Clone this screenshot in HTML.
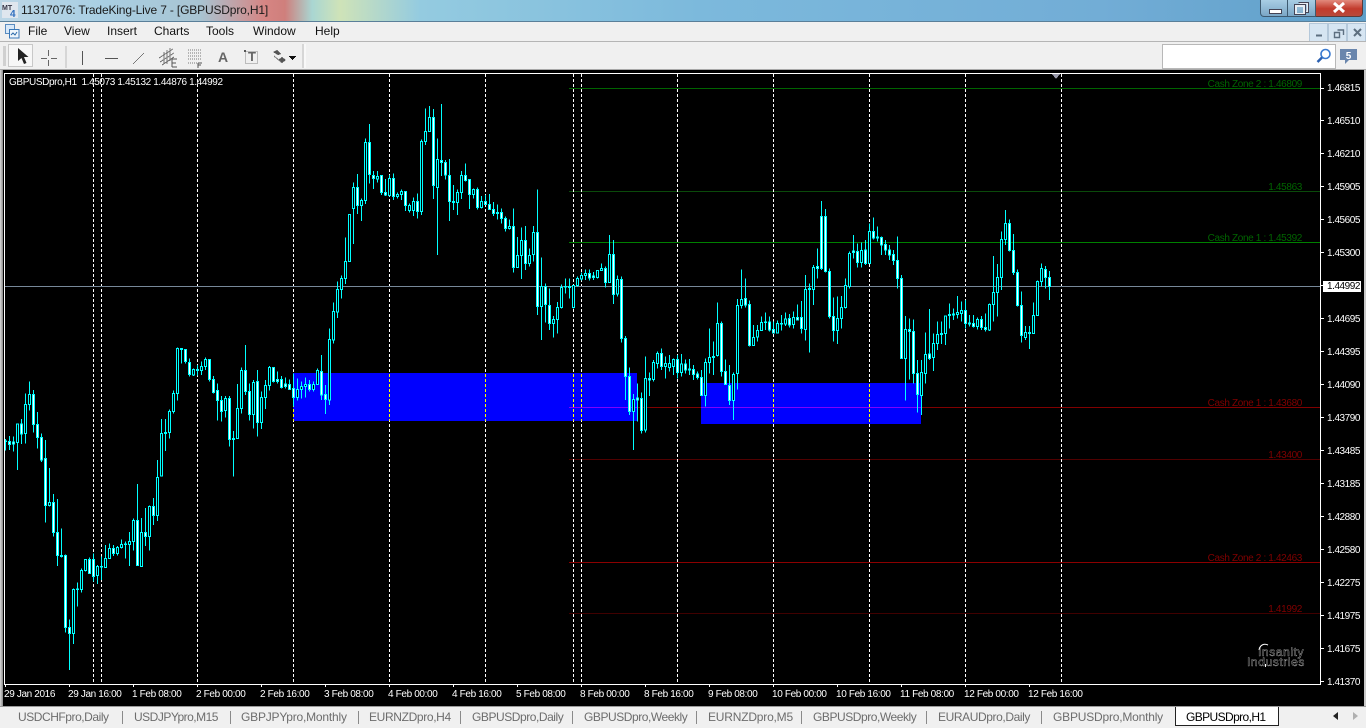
<!DOCTYPE html>
<html><head><meta charset="utf-8"><title>MT4</title>
<style>
html,body{margin:0;padding:0;width:1366px;height:728px;overflow:hidden;background:#f0f0f0}
body{position:relative;font-family:"Liberation Sans",sans-serif}
div,span,svg{position:absolute}
.t{white-space:pre;font:10px/12px "Liberation Sans",sans-serif;letter-spacing:-.45px;color:#fff}
.p{left:1327px}
.x{top:689px;letter-spacing:-.36px}
.l{right:64px;letter-spacing:-.35px}
.m{top:24px;font:12px/15px "Liberation Sans",sans-serif;color:#111;white-space:pre}
.tab{top:710px;font:12px/15px "Liberation Sans",sans-serif;letter-spacing:-.45px;color:#6d6d6d;white-space:pre}
.sep{top:711px;width:1px;height:13px;background:#8a8a8a}
</style></head><body>
<div style="left:0;top:0;width:1366px;height:21px;background:linear-gradient(90deg,#bcd6e6 0,#a9cfe3 100px,#a8c4d2 200px,#d68583 265px,#cf7f7c 285px,#a9d6d2 312px,#cfe3b8 340px,#94cbe0 420px,#7cb9dc 700px,#72add6 1100px,#5f9fc9 1366px)"></div>
<div style="left:0;top:21px;width:1366px;height:1px;background:#5a7f99"></div>
<svg style="left:2px;top:2px" width="16" height="16"><rect width="16" height="16" fill="#dfe6ee"/><text x="0" y="8" font-size="7" font-weight="bold" fill="#334" font-family="Liberation Sans">MT</text><text x="8" y="15" font-size="10" font-weight="bold" fill="#2f6fc0" font-family="Liberation Sans">4</text></svg>
<span class="m" style="left:21px;top:3px;color:#1a1a1a;letter-spacing:-.16px">11317076: TradeKing-Live 7 - [GBPUSDpro,H1]</span>
<div style="left:1260px;top:0;width:28px;height:17px;box-sizing:border-box;border:1px solid #3d5a70;border-top:0;border-radius:0 0 0 4px;background:linear-gradient(#a8cde4,#7ba7c6)"></div>
<div style="left:1269px;top:9px;width:11px;height:3px;background:#fff;border:1px solid #445"></div>
<div style="left:1288px;top:0;width:28px;height:17px;box-sizing:border-box;border:1px solid #3d5a70;border-top:0;border-left:0;background:linear-gradient(#a8cde4,#7ba7c6)"></div>
<svg style="left:1294px;top:2px" width="16" height="13"><path d="M5.5 1.5h8v8h-3" fill="none" stroke="#e8eef3" stroke-width="1.5"/><path d="M4.5.5h10v10h-3" fill="none" stroke="#445"/><rect x="2" y="4" width="8" height="8" fill="none" stroke="#e8eef3" stroke-width="2"/><rect x=".5" y="2.5" width="11" height="10" fill="none" stroke="#445"/></svg>
<div style="left:1316px;top:0;width:47px;height:17px;box-sizing:border-box;border:1px solid #5a3a3a;border-top:0;border-left:0;border-radius:0 0 4px 0;background:linear-gradient(#e28a7d,#c23a2c 55%,#b84a3c)"></div>
<svg style="left:1332px;top:2px" width="14" height="11"><path d="M2 1L12 10M12 1L2 10" stroke="#fff" stroke-width="3" fill="none"/></svg>

<div style="left:0;top:22px;width:1366px;height:19px;background:#f0f0f0"></div>
<svg style="left:5px;top:24px" width="15" height="15"><rect x=".5" y=".5" width="9" height="9" fill="#d8e8f8" stroke="#5a8cc0"/><rect x="4.5" y="5.5" width="9.5" height="8.5" fill="#eef5fb" stroke="#3a78b8"/><path d="M6 11l2-2 2 2 2-3" stroke="#2a68a8" fill="none"/></svg>
<span class="m" style="left:28px">File</span><span class="m" style="left:64px">View</span><span class="m" style="left:107px">Insert</span><span class="m" style="left:154px">Charts</span><span class="m" style="left:206px">Tools</span><span class="m" style="left:253px">Window</span><span class="m" style="left:315px">Help</span>
<div style="left:1309px;top:23px;width:17px;height:17px;background:#d6e5f2;border:1px solid #b4c8da"></div>
<div style="left:1328px;top:23px;width:17px;height:17px;background:#d6e5f2;border:1px solid #b4c8da"></div>
<div style="left:1347px;top:23px;width:17px;height:17px;background:#d6e5f2;border:1px solid #b4c8da"></div>
<svg style="left:1309px;top:23px" width="57" height="19"><path d="M7 12.5h6" stroke="#5d6f80" stroke-width="2"/><path d="M25.5 9.5h5v5h-5zM28.5 7h6v5" fill="none" stroke="#5d6f80" stroke-width="1.4"/><path d="M45 6l7 7M52 6l-7 7" stroke="#5d6f80" stroke-width="2"/></svg>

<div style="left:0;top:41px;width:1366px;height:1px;background:#b5b5b5"></div>
<div style="left:0;top:42px;width:1366px;height:27px;background:#f0f0f0"></div>
<div style="left:0;top:69px;width:1366px;height:1px;background:#a8a8a8"></div>
<svg style="left:0;top:42px" width="310" height="27" shape-rendering="crispEdges">
<path d="M3 5h3M3 7h3M3 9h3M3 11h3M3 13h3M3 15h3M3 17h3M3 19h3M3 21h3M3 23h3" stroke="#b0b0b0"/>
<rect x="8.5" y="2.5" width="24" height="22" fill="#f7f7f7" stroke="#c8c8c8"/>
<path d="M66 4v22" stroke="#bbb"/><path d="M303 2v24" stroke="#bbb"/><path d="M305 2v24" stroke="#fff"/>
<path d="M48.5 8v6M48.5 18v6M41 16.5h6M51 16.5h6" stroke="#666"/>
<path d="M82.5 9v14" stroke="#555"/><path d="M105 16.5h13" stroke="#555"/>
<path d="M133 22h1v-1h1v-1h1v-1h1v-1h1v-1h1v-1h1v-1h1v-1h1v-1h1v-1h1v-1h-1v1h-1v1h-1v1h-1v1h-1v1h-1v1h-1v1h-1v1h-1v1h-1v1h-1z" fill="#777"/>
<path d="M159 16l14-9M160 20l14-9M162 23l12-8M164 10v12M167 8v14M170 6v13" stroke="#777" fill="none"/>
<path d="M172 20h5M172 20v8M172 24h4M172 28h5" stroke="#555" transform="translate(0,-3)"/>
<path d="M188 8h14M188 11h14M188 14h14M188 17h14M188 21h10" stroke="#777" stroke-dasharray="1 1"/>
<path d="M198 20h4M198 20v5M198 22h3" stroke="#555" transform="translate(0,1)"/>
<rect x="245.5" y="9.5" width="12" height="12" fill="none" stroke="#888" stroke-dasharray="1 1"/>
<rect x="244" y="8" width="2" height="2" fill="#555"/>
<path d="M273 10l4-2 4 4-3 1zM282 15l4 3-4 3-4-3z" fill="#555"/><path d="M274 14l7 6" stroke="#777"/>
<path d="M289 14h7v1h-1v1h-1v1h-1v1h-1v-1h-1v-1h-1v-1h-1z" fill="#111"/>
</svg>
<svg style="left:17px;top:48px" width="16" height="18"><path d="M1 0L1 13 4.5 10 7 16 9.5 15 7 9 11.5 9Z" fill="#222"/></svg>
<span style="left:218px;top:49px;font:bold 14px/16px 'Liberation Sans',sans-serif;color:#666">A</span>
<span style="left:248px;top:50px;font:bold 13px/14px 'Liberation Sans',sans-serif;color:#666">T</span>
<div style="left:1162px;top:44px;width:172px;height:23px;background:#fff;border:1px solid #b8b8b8"></div>
<svg style="left:1316px;top:48px" width="16" height="16"><circle cx="9.5" cy="6" r="4.5" fill="none" stroke="#3a7ad0" stroke-width="1.6"/><path d="M6 9.5L1.5 14" stroke="#2a5fb0" stroke-width="2.5"/></svg>
<svg style="left:1340px;top:49px" width="18" height="17"><path d="M0 0h17v11H9l-4 4v-4H0z" fill="#6a86ad"/><text x="8.5" y="10" text-anchor="middle" fill="#fff" font-size="10" font-weight="bold" font-family="Liberation Sans">5</text></svg>

<div style="left:0;top:70px;width:3px;height:637px;background:linear-gradient(90deg,#d8d8d8,#8a8a8a)"></div>
<div style="left:1364px;top:70px;width:2px;height:637px;background:#c8c8c8"></div>
<div style="left:3px;top:70px;width:1361px;height:636px;background:#000"></div>
<div style="left:0;top:706px;width:1366px;height:1px;background:#9a9a9a"></div>

<svg style="left:0;top:0" width="1366" height="728" shape-rendering="crispEdges">
<rect x="3" y="70" width="1361" height="636" fill="#000"/>
<rect x="293" y="373" width="344" height="48" fill="#00f"/>
<rect x="701" y="383" width="220" height="41" fill="#00f"/>
<g stroke="#fff" stroke-dasharray="3 2" style="mix-blend-mode:difference">
<path d="M93.5 74V684M101.5 74V684M197.5 74V684M293.5 74V684M389.5 74V684M485.5 74V684M573.5 74V684M581.5 74V684M677.5 74V684M773.5 74V684M869.5 74V684M965.5 74V684M1061.5 74V684"/>
</g>
<g style="mix-blend-mode:screen" fill="none">
<path d="M569 88.5H1321" stroke="#006400"/>
<path d="M569 191.5H1321" stroke="#0a4a0a"/>
<path d="M569 242.5H1321" stroke="#008000"/>
<path d="M569 407.5H1321" stroke="#800000"/>
<path d="M569 459.5H1321" stroke="#500000"/>
<path d="M569 562.5H1321" stroke="#8b0000"/>
<path d="M569 613.5H1321" stroke="#400000"/>
</g>
<path d="M5 286.5H1321" stroke="#778899"/>

<g transform="matrix(.33333 0 0 .33333 .16667 340)" stroke="#0ff" stroke-width="3" fill="none">
<path d="M16 297V332M28 288V330M40 290V335M52 250V390M64 237V312M76 160V310M88 124V212M100 150V278M112 216V326M124 280V366M136 300V548M148 384V500M160 462V590M172 477V678M184 565V652M196 643V878M208 838V990M220 745V912M232 728V800M244 685V758M256 658V695M268 652V702M280 640V724M292 675V732M304 650V720M316 615V684M328 610V656M340 615V648M352 618V646M364 598V625M376 605V656M388 576V678M400 535V632M412 432V678M424 534V680M436 504V618M448 496V632M460 474V555M472 360V543M484 237V410M496 237V333M508 208V296M520 152V220M532 22V182M544 25V70M556 28V70M568 55V110M580 85V108M592 75V107M604 65V105M616 52V90M628 57V125M640 108V160M652 130V242M664 168V245M676 168V232M688 168V320M700 273V410M712 132V296M724 82V220M736 15V165M748 130V242M760 120V266M772 90V290M784 155V267M796 120V207M808 78V152M820 82V128M832 95V130M844 108V145M856 112V146M868 118V150M880 100V200M892 115V182M904 125V175M916 112V173M928 120V155M940 125V155M952 85V135M964 45V180M976 135V222"/>
<path fill="#000" d="M13 303h6V305h-6zM49 252h6V308h-6zM73 193h6V280h-6zM85 163h6V193h-6zM145 487h6V497h-6zM217 748h6V880h-6zM229 747h6V749h-6zM241 691h6V749h-6zM253 658h6V692h-6zM289 680h6V707h-6zM301 679h6V681h-6zM313 655h6V683h-6zM325 625h6V655h-6zM349 622h6V641h-6zM361 613h6V623h-6zM373 612h6V614h-6zM385 604h6V614h-6zM397 541h6V604h-6zM421 577h6V680h-6zM445 499h6V590h-6zM469 412h6V527h-6zM481 280h6V408h-6zM505 214h6V278h-6zM517 160h6V215h-6zM529 25h6V160h-6zM577 88h6V105h-6zM601 79h6V92h-6zM613 58h6V79h-6zM673 175h6V212h-6zM709 205h6V296h-6zM721 91h6V205h-6zM757 127h6V223h-6zM781 172h6V247h-6zM793 136h6V172h-6zM805 82h6V136h-6zM889 148h6V172h-6zM901 139h6V148h-6zM913 133h6V139h-6zM937 133h6V149h-6zM949 91h6V133h-6z"/>
<path fill="#fff" d="M25 304h6V314h-6zM37 306h6V312h-6zM61 252h6V282h-6zM97 163h6V254h-6zM109 253h6V292h-6zM121 292h6V360h-6zM133 355h6V497h-6zM157 487h6V578h-6zM169 577h6V647h-6zM181 646h6V649h-6zM193 646h6V863h-6zM205 862h6V880h-6zM265 658h6V700h-6zM277 658h6V710h-6zM337 625h6V641h-6zM409 541h6V677h-6zM433 577h6V590h-6zM457 499h6V527h-6zM493 277h6V281h-6zM541 25h6V29h-6zM553 28h6V65h-6zM565 67h6V104h-6zM589 88h6V92h-6zM625 58h6V119h-6zM637 118h6V157h-6zM649 151h6V181h-6zM661 181h6V214h-6zM685 175h6V298h-6zM697 295h6V298h-6zM733 91h6V155h-6zM745 154h6V223h-6zM769 124h6V248h-6zM817 82h6V125h-6zM829 118h6V125h-6zM841 118h6V143h-6zM853 132h6V140h-6zM865 133h6V148h-6zM877 145h6V172h-6zM925 133h6V149h-6zM961 94h6V165h-6zM973 163h6V179h-6z"/>
</g>

<g transform="matrix(.33333 0 0 .33333 300.16667 90)" stroke="#0ff" stroke-width="3" fill="none">
<path d="M88 715V945M100 637V760M112 575V684M124 556V625M136 442V582M148 373V515M160 277V462M172 252V372M184 325V393M196 145V342M208 102V280M220 243V297M232 243V277M244 255V315M256 267V318M268 255V320M280 250V330M292 308V325M304 298V330M316 304V363M328 340V368M340 322V378M352 310V386M364 148V375M376 55V165M388 48V125M400 57V327M412 145V495M424 42V258M436 210V268M448 207V393M460 285V360M472 298V375M484 243V327M496 220V275M508 267V357M520 295V326M532 292V358M544 318V355M556 315V345M568 312V360M580 336V378M592 343V388M604 355V400M616 380V425M628 388V418M640 355V548M652 441V534M664 412V567M676 408V540M688 476V530M700 408V515M712 298V675M724 502V750M736 580V697M748 595V720M760 678V743M772 636V730M784 583V655M796 565V610M808 565V625M820 585V655M832 560V590M844 547V572M856 538V570M868 538V572M880 546V570M892 540V566M904 520V543M916 530V592M928 435V578M940 450V642M952 556V620M964 560V758M976 738V930M988 832V975M1000 912V1080M1012 880V995M1024 908V1030M1036 800V1028"/>
<path fill="#000" d="M85 748h6V930h-6zM97 664h6V750h-6zM109 598h6V666h-6zM121 565h6V598h-6zM133 514h6V566h-6zM145 373h6V515h-6zM157 292h6V356h-6zM181 332h6V347h-6zM193 157h6V332h-6zM229 259h6V267h-6zM265 265h6V316h-6zM289 313h6V320h-6zM301 304h6V314h-6zM325 346h6V362h-6zM337 334h6V362h-6zM361 154h6V365h-6zM373 124h6V154h-6zM385 82h6V124h-6zM409 208h6V293h-6zM469 307h6V338h-6zM481 256h6V307h-6zM517 298h6V314h-6zM541 334h6V353h-6zM625 409h6V415h-6zM649 496h6V532h-6zM661 451h6V496h-6zM685 496h6V520h-6zM697 427h6V494h-6zM721 590h6V650h-6zM757 688h6V700h-6zM769 652h6V688h-6zM781 592h6V652h-6zM793 589h6V591h-6zM817 587h6V653h-6zM829 565h6V587h-6zM841 556h6V567h-6zM853 550h6V556h-6zM889 541h6V563h-6zM901 535h6V541h-6zM925 493h6V578h-6zM949 568h6V612h-6zM997 928h6V965h-6zM1033 865h6V1020h-6z"/>
<path fill="#fff" d="M169 292h6V347h-6zM205 157h6V254h-6zM217 256h6V266h-6zM241 256h6V308h-6zM253 307h6V315h-6zM277 265h6V320h-6zM313 304h6V347h-6zM349 334h6V365h-6zM397 82h6V287h-6zM421 211h6V218h-6zM433 217h6V255h-6zM445 256h6V335h-6zM457 334h6V338h-6zM493 256h6V272h-6zM505 268h6V314h-6zM529 298h6V353h-6zM553 334h6V343h-6zM565 343h6V358h-6zM577 358h6V370h-6zM589 367h6V370h-6zM601 367h6V385h-6zM613 385h6V415h-6zM637 409h6V532h-6zM673 451h6V520h-6zM709 427h6V650h-6zM733 590h6V643h-6zM745 646h6V700h-6zM805 589h6V592h-6zM865 550h6V564h-6zM877 558h6V563h-6zM913 535h6V578h-6zM937 493h6V613h-6zM961 568h6V745h-6zM973 745h6V860h-6zM985 859h6V965h-6zM1009 924h6V930h-6zM1021 925h6V1022h-6z"/>
</g>

<g transform="matrix(.33333 0 0 .33333 640.16667 190)" stroke="#0ff" stroke-width="3" fill="none">
<path d="M28 548V618M40 510V575M52 485V535M64 475V540M76 500V565M88 495V545M100 505V555M112 495V565M124 492V560M136 508V550M148 507V555M160 525V570M172 545V568M184 540V618M196 505V650M208 415V550M220 455V555M232 337V500M244 395V560M256 508V585M268 525V645M280 548V690M292 327V598M304 238V355M316 265V352M328 332V470M340 405V468M352 405V455M364 380V423M376 367V420M388 380V425M400 395V430M412 392V430M424 375V422M436 368V408M448 372V412M460 365V415M472 343V392M484 333V430M496 255V452M508 280V488M520 225V345M532 175V265M544 33V240M556 57V247M568 235V385M580 322V455M592 320V462M604 318V415M616 265V355M628 185V295M640 135V205M652 160V233M664 158V232M676 150V225M688 100V222M700 82V148M712 110V155M724 140V195M736 150V195M748 165V210M760 180V225M772 140V295M784 255V505M796 378V632M808 385V568M820 388V580M832 510V668M844 510V675M856 427V580M868 357V510M880 430V543M892 395V480M904 395V462M916 378V465M928 340V415M940 355V390M952 318V385M964 335V395M976 330V415M988 375V410M1000 375V412M1012 382V418M1024 378V420M1036 370V425M1048 340V423M1060 198V395M1072 222V380M1084 125V300M1096 60V165M1108 88V185M1120 132V255M1132 238V350M1144 305V458M1156 408V450M1168 408V477M1180 337V432M1192 272V378M1204 220V290M1216 228V295M1228 243V330"/>
<path fill="#000" d="M37 517h6V569h-6zM49 490h6V520h-6zM73 520h6V530h-6zM85 520h6V533h-6zM97 508h6V530h-6zM121 522h6V548h-6zM193 517h6V617h-6zM205 502h6V518h-6zM229 400h6V497h-6zM277 553h6V632h-6zM289 347h6V550h-6zM301 328h6V347h-6zM337 442h6V467h-6zM349 421h6V441h-6zM361 397h6V421h-6zM373 396h6V398h-6zM409 400h6V429h-6zM421 400h6V402h-6zM433 387h6V402h-6zM457 382h6V404h-6zM493 298h6V418h-6zM517 232h6V298h-6zM589 385h6V421h-6zM601 352h6V385h-6zM613 287h6V353h-6zM625 190h6V290h-6zM661 181h6V218h-6zM685 124h6V221h-6zM793 418h6V505h-6zM841 547h6V617h-6zM853 493h6V550h-6zM877 460h6V503h-6zM889 433h6V460h-6zM913 378h6V431h-6zM925 373h6V376h-6zM937 372h6V375h-6zM949 367h6V373h-6zM961 361h6V370h-6zM985 399h6V402h-6zM1009 388h6V410h-6zM1045 343h6V420h-6zM1057 307h6V344h-6zM1069 262h6V307h-6zM1081 149h6V262h-6zM1093 100h6V149h-6zM1153 427h6V443h-6zM1165 427h6V430h-6zM1177 376h6V430h-6zM1189 275h6V376h-6zM1201 235h6V275h-6z"/>
<path fill="#fff" d="M25 566h6V570h-6zM61 490h6V530h-6zM109 508h6V548h-6zM133 522h6V540h-6zM145 537h6V540h-6zM157 538h6V554h-6zM169 552h6V563h-6zM181 562h6V617h-6zM217 499h6V503h-6zM241 400h6V545h-6zM253 544h6V584h-6zM265 586h6V632h-6zM313 325h6V345h-6zM325 343h6V467h-6zM385 396h6V420h-6zM397 418h6V429h-6zM445 385h6V405h-6zM469 382h6V390h-6zM481 382h6V416h-6zM505 295h6V299h-6zM529 229h6V236h-6zM541 80h6V236h-6zM553 80h6V245h-6zM565 245h6V380h-6zM577 380h6V422h-6zM637 183h6V188h-6zM649 184h6V218h-6zM673 180h6V221h-6zM697 124h6V144h-6zM709 141h6V144h-6zM721 142h6V165h-6zM733 163h6V180h-6zM745 180h6V195h-6zM757 193h6V212h-6zM769 212h6V266h-6zM781 265h6V505h-6zM805 418h6V425h-6zM817 424h6V550h-6zM829 550h6V613h-6zM865 492h6V506h-6zM901 430h6V434h-6zM973 361h6V400h-6zM997 400h6V410h-6zM1021 388h6V412h-6zM1033 412h6V419h-6zM1105 100h6V182h-6zM1117 181h6V247h-6zM1129 247h6V347h-6zM1141 346h6V437h-6zM1213 238h6V263h-6zM1225 263h6V289h-6z"/>
</g>

<path d="M4.5 73.5H1321" stroke="#fff"/><path d="M4.5 684.5H1321" stroke="#fff"/>
<path d="M4.5 73V685" stroke="#fff"/><path d="M1320.5 73V685" stroke="#fff"/>
<path d="M1052 74h8l-4 5z" fill="#99a"/>
<path stroke="#fff" d="M1321 88.5h3M1321 120.5h3M1321 153.5h3M1321 186.5h3M1321 219.5h3M1321 252.5h3M1321 285.5h3M1321 318.5h3M1321 351.5h3M1321 384.5h3M1321 417.5h3M1321 450.5h3M1321 483.5h3M1321 516.5h3M1321 549.5h3M1321 582.5h3M1321 615.5h3M1321 648.5h3M1321 681.5h3"/>
<path stroke="#fff" d="M5.5 684v3M69.5 684v3M133.5 684v3M197.5 684v3M261.5 684v3M325.5 684v3M389.5 684v3M453.5 684v3M517.5 684v3M581.5 684v3M645.5 684v3M709.5 684v3M773.5 684v3M837.5 684v3M901.5 684v3M965.5 684v3M1029.5 684v3"/>
</svg>

<span class="t" style="left:9px;top:77px;letter-spacing:-.38px">GBPUSDpro,H1  1.45073 1.45132 1.44876 1.44992</span>

<span class="t l" style="top:79px;color:#006400">Cash Zone 2 : 1.46809</span>
<span class="t l" style="top:182px;color:#006400">1.45863</span>
<span class="t l" style="top:233px;color:#006400">Cash Zone 1 : 1.45392</span>
<span class="t l" style="top:398px;color:#800000">Cash Zone 1 : 1.43680</span>
<span class="t l" style="top:450px;color:#800000">1.43400</span>
<span class="t l" style="top:553px;color:#800000">Cash Zone 2 : 1.42463</span>
<span class="t l" style="top:604px;color:#800000">1.41992</span>

<span class="t p" style="top:83px">1.46815</span><span class="t p" style="top:116px">1.46510</span><span class="t p" style="top:149px">1.46210</span><span class="t p" style="top:182px">1.45905</span><span class="t p" style="top:215px">1.45605</span><span class="t p" style="top:248px">1.45300</span>
<div style="left:1323px;top:281px;width:38px;height:11px;background:#fff"></div>
<span class="t p" style="top:281px;color:#000">1.44992</span>
<span class="t p" style="top:314px">1.44695</span><span class="t p" style="top:347px">1.44395</span><span class="t p" style="top:380px">1.44090</span><span class="t p" style="top:413px">1.43790</span><span class="t p" style="top:446px">1.43485</span><span class="t p" style="top:479px">1.43185</span><span class="t p" style="top:512px">1.42880</span><span class="t p" style="top:545px">1.42580</span><span class="t p" style="top:578px">1.42275</span><span class="t p" style="top:611px">1.41975</span><span class="t p" style="top:644px">1.41675</span><span class="t p" style="top:677px">1.41370</span>

<span class="t x" style="left:4px">29 Jan 2016</span><span class="t x" style="left:68px">29 Jan 16:00</span><span class="t x" style="left:132px">1 Feb 08:00</span><span class="t x" style="left:196px">2 Feb 00:00</span><span class="t x" style="left:260px">2 Feb 16:00</span><span class="t x" style="left:324px">3 Feb 08:00</span><span class="t x" style="left:388px">4 Feb 00:00</span><span class="t x" style="left:452px">4 Feb 16:00</span><span class="t x" style="left:516px">5 Feb 08:00</span><span class="t x" style="left:580px">8 Feb 00:00</span><span class="t x" style="left:644px">8 Feb 16:00</span><span class="t x" style="left:708px">9 Feb 08:00</span><span class="t x" style="left:772px">10 Feb 00:00</span><span class="t x" style="left:836px">10 Feb 16:00</span><span class="t x" style="left:900px">11 Feb 08:00</span><span class="t x" style="left:964px">12 Feb 00:00</span><span class="t x" style="left:1028px">12 Feb 16:00</span>

<span style="left:1258px;top:646px;white-space:pre;font:12px/12px 'Liberation Sans',sans-serif;color:#000;-webkit-text-stroke:.3px #ddd;letter-spacing:.6px">Insanity</span>
<span style="left:1247px;top:656px;white-space:pre;font:12px/12px 'Liberation Sans',sans-serif;color:#000;-webkit-text-stroke:.3px #ddd;letter-spacing:.6px">Industries</span>
<svg style="left:1256px;top:640px" width="20" height="30"><path d="M3 10C4 5 8 3 12 5" fill="none" stroke="#fff"/><path d="M9.5 24v3" stroke="#fff"/></svg>

<span class="tab" style="left:18px">USDCHFpro,Daily</span><div class="sep" style="left:122px"></div>
<span class="tab" style="left:134px;letter-spacing:-.5px">USDJPYpro,M15</span><div class="sep" style="left:230px"></div>
<span class="tab" style="left:241px;letter-spacing:-.2px">GBPJPYpro,Monthly</span><div class="sep" style="left:358px"></div>
<span class="tab" style="left:369px;letter-spacing:-.35px">EURNZDpro,H4</span><div class="sep" style="left:460px"></div>
<span class="tab" style="left:472px">GBPUSDpro,Daily</span><div class="sep" style="left:572px"></div>
<span class="tab" style="left:584px">GBPUSDpro,Weekly</span><div class="sep" style="left:696px"></div>
<span class="tab" style="left:708px;letter-spacing:-.2px">EURNZDpro,M5</span><div class="sep" style="left:801px"></div>
<span class="tab" style="left:813px">GBPUSDpro,Weekly</span><div class="sep" style="left:926px"></div>
<span class="tab" style="left:938px;letter-spacing:-.4px">EURAUDpro,Daily</span><div class="sep" style="left:1041px"></div>
<span class="tab" style="left:1053px;letter-spacing:-.2px">GBPUSDpro,Monthly</span>
<div style="left:1175px;top:707px;width:102px;height:18px;background:#fff;border:1px solid #222;border-top:0"></div>
<span class="tab" style="left:1186px;color:#000;letter-spacing:-.6px">GBPUSDpro,H1</span>
<svg style="left:1330px;top:711px" width="30" height="10"><path d="M8 1v8L3 5z" fill="#222"/><path d="M23 1v8l5-4z" fill="#b0b0b0"/></svg>
</body></html>
